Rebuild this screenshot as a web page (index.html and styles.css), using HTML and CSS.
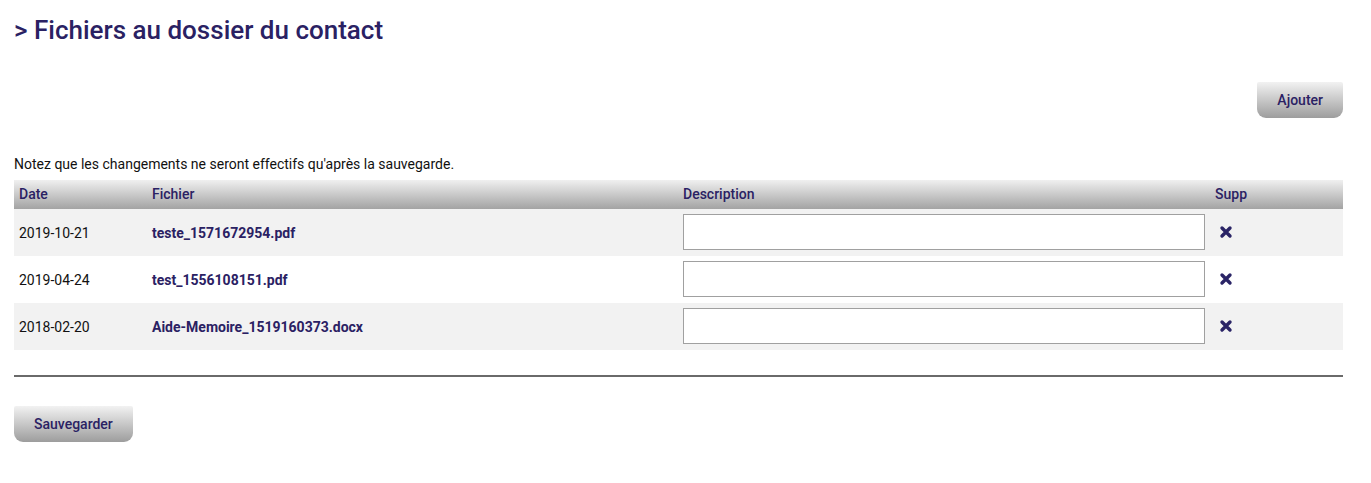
FILE: index.html
```html
<!DOCTYPE html>
<html lang="fr">
<head>
<meta charset="utf-8">
<title>Fichiers au dossier du contact</title>
<link rel="stylesheet" href="styles.css">
</head>
<body>
<div class="page">
  <h1 class="title">&gt; Fichiers au dossier du contact</h1>
  <div class="actions">
    <button class="btn" type="button">Ajouter</button>
  </div>
  <p class="note">Notez que les changements ne seront effectifs qu'après la sauvegarde.</p>
  <table class="files">
    <colgroup>
      <col class="c-date">
      <col class="c-file">
      <col class="c-desc">
      <col class="c-supp">
    </colgroup>
    <thead>
      <tr><th>Date</th><th>Fichier</th><th>Description</th><th>Supp</th></tr>
    </thead>
    <tbody>
      <tr>
        <td>2019-10-21</td>
        <td class="fname">teste_1571672954.pdf</td>
        <td><input class="desc" type="text"></td>
        <td><span class="del"><svg viewBox="0 0 14 14" width="14" height="14"><path d="M3 3L11 11M11 3L3 11" stroke="#2a2466" stroke-width="3.4" stroke-linecap="round"/></svg></span></td>
      </tr>
      <tr>
        <td>2019-04-24</td>
        <td class="fname">test_1556108151.pdf</td>
        <td><input class="desc" type="text"></td>
        <td><span class="del"><svg viewBox="0 0 14 14" width="14" height="14"><path d="M3 3L11 11M11 3L3 11" stroke="#2a2466" stroke-width="3.4" stroke-linecap="round"/></svg></span></td>
      </tr>
      <tr>
        <td>2018-02-20</td>
        <td class="fname">Aide-Memoire_1519160373.docx</td>
        <td><input class="desc" type="text"></td>
        <td><span class="del"><svg viewBox="0 0 14 14" width="14" height="14"><path d="M3 3L11 11M11 3L3 11" stroke="#2a2466" stroke-width="3.4" stroke-linecap="round"/></svg></span></td>
      </tr>
    </tbody>
  </table>
  <hr class="sep">
  <button class="btn btn-save" type="button">Sauvegarder</button>
</div>
</body>
</html>
```

FILE: styles.css
```css
* { box-sizing: border-box; }
html, body { margin: 0; padding: 0; background: #fff; }
body { font-family: Roboto, "Liberation Sans", Arial, sans-serif; color: #111; font-size: 14px; }
.page { padding: 15px 28px 0 14px; }
.title {
  margin: 0;
  font-size: 26px;
  font-weight: 500;
  color: #2a2163;
  line-height: 30px;
}
.actions { display: flex; justify-content: flex-end; margin-top: 37px; }
.btn {
  font-family: Roboto, "Liberation Sans", Arial, sans-serif;
  font-size: 14px;
  font-weight: 500;
  color: #2a2163;
  height: 36px;
  padding: 0 20px;
  border: 0;
  border-radius: 2px 2px 9px 9px;
  background: linear-gradient(#f2f2f2, #9d9d9d);
  cursor: pointer;
}
.note { margin: 38px 0 0; line-height: 16px; }
.files {
  width: 100%;
  border-collapse: collapse;
  margin-top: 8px;
  table-layout: fixed;
}
.c-date { width: 133px; }
.c-file { width: 531px; }
.c-desc { width: 532px; }
.files th {
  text-align: left;
  font-weight: 500;
  color: #2a2163;
  height: 29px;
  padding: 0 5px 1px;
  background: linear-gradient(#f0f0f0, #a3a3a3);
}
.files td { height: 47px; padding: 0 5px; }
.files tbody tr:nth-child(odd) td { background: #f2f2f2; }
.fname { font-weight: 700; color: #2a2163; }
.desc {
  display: block;
  width: 522px;
  height: 36px;
  border: 1px solid #a0a0a0;
  background: #fff;
  margin: 0 0 1px;
  padding: 0 4px;
  font: 14px Roboto, sans-serif;
}
.del { display: inline-flex; margin-left: 4px; margin-top: 1px; }
.sep { margin: 25px 0 0; border: 0; height: 2px; background: #6a6a6a; }
.btn-save { margin-top: 29px; padding: 0 20px; }
```
